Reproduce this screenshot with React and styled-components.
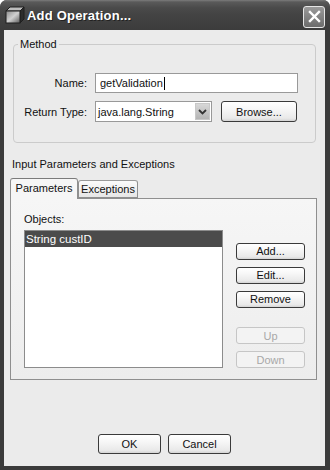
import styled, { createGlobalStyle } from 'styled-components';

const GlobalStyle = createGlobalStyle`
  html, body {
    margin: 0;
    padding: 0;
    background: #ffffff;
  }
  body {
    font-family: 'Liberation Sans', Arial, sans-serif;
    font-size: 11px;
    color: #111;
  }
  * {
    box-sizing: border-box;
  }
`;

const Window = styled.div`
  width: 330px;
  height: 470px;
  display: flex;
  flex-direction: column;
  background: #3b3b3b;
  border-radius: 7px 7px 0 0;
  overflow: hidden;
`;

const TitleBar = styled.div`
  height: 30px;
  flex: none;
  display: flex;
  align-items: center;
  padding: 0 5px 0 5px;
  background: linear-gradient(#7c7c7c 0, #5a5a5a 2px, #4a4a4a 8px, #434343 50%, #3c3c3c 100%);
  .title {
    flex: 1;
    margin-left: 2px;
    color: #fff;
    font-weight: 700;
    font-size: 13px;
    letter-spacing: 0.2px;
    text-shadow: 1px 1px 0 #222;
  }
`;

const CloseButton = styled.div`
  width: 22px;
  height: 22px;
  border: 1px solid #e6e6e6;
  border-radius: 3px;
  background: linear-gradient(#9a9a9a, #6c6c6c);
  display: flex;
  align-items: center;
  justify-content: center;
  margin-top: 3px;
`;

const Client = styled.div`
  flex: 1;
  margin: 0 5px 4px 4px;
  background: #ebebeb;
  display: flex;
  flex-direction: column;
`;

const GroupBox = styled.fieldset`
  margin: 8px 9px 0 9px;
  padding: 0;
  border: 1px solid #cbcbcb;
  border-radius: 4px;
  legend {
    margin-left: 4px;
    padding: 0 2px;
    line-height: 13px;
  }
`;

const FormGrid = styled.div`
  display: grid;
  grid-template-columns: 65px 1fr;
  column-gap: 8px;
  row-gap: 8px;
  align-items: center;
  padding: 22px 0 20px 8px;
  label {
    justify-self: end;
  }
`;

const TextField = styled.div`
  width: 203px;
  height: 20px;
  border: 1px solid #999;
  background: #fff;
  padding-left: 4px;
  display: flex;
  align-items: center;
  .caret {
    width: 1px;
    height: 13px;
    background: #000;
    margin-left: 1px;
  }
`;

const ReturnRow = styled.div`
  display: flex;
  align-items: center;
  gap: 9px;
`;

const Select = styled.div`
  width: 117px;
  height: 21px;
  border: 1px solid #999;
  background: #fff;
  display: flex;
  align-items: center;
  padding: 1px;
  .value {
    flex: 1;
    padding-left: 1px;
  }
`;

const DropButton = styled.div`
  width: 15px;
  height: 17px;
  background: linear-gradient(#d8d8d8, #b4b4b4);
  border: 1px solid #c8c8c8;
  display: flex;
  align-items: center;
  justify-content: center;
`;

const PushButton = styled.button`
  width: ${(p) => p.$w || 69}px;
  height: ${(p) => p.$h || 18}px;
  padding: 0;
  font-family: inherit;
  font-size: 11px;
  border-radius: 3px;
  border: 1px solid ${(p) => (p.disabled ? '#c6c6c6' : '#3a3a3a')};
  color: ${(p) => (p.disabled ? '#a8a8a8' : '#111')};
  background: ${(p) =>
    p.disabled
      ? '#f3f3f3'
      : 'linear-gradient(#ffffff 0, #f6f6f6 40%, #e9e9e9 85%, #d4d4d4 100%)'};
`;

const SectionLabel = styled.div`
  margin: 15px 0 0 8px;
  line-height: 13px;
`;

const TabStrip = styled.div`
  margin: 7px 0 0 6px;
  height: 20px;
  display: flex;
  align-items: flex-end;
  position: relative;
  z-index: 1;
`;

const Tab = styled.div`
  width: ${(p) => p.$w}px;
  height: ${(p) => (p.$active ? 21 : 18)}px;
  margin-bottom: ${(p) => (p.$active ? -1 : 0)}px;
  border: 1px solid #8f8f8f;
  border-top-color: ${(p) => (p.$active ? '#7a7a7a' : '#9a9a9a')};
  border-bottom: ${(p) => (p.$active ? 'none' : '1px solid #8f8f8f')};
  border-radius: 3px 3px 0 0;
  background: ${(p) => (p.$active ? '#f6f6f6' : 'linear-gradient(#fbfbfb, #e6e6e6)')};
  display: flex;
  align-items: center;
  justify-content: center;
  padding-bottom: ${(p) => (p.$active ? 2 : 0)}px;
  font-size: 11px;
`;

const TabPanel = styled.div`
  margin: 0 8px 0 6px;
  height: 182px;
  border: 1px solid #8f8f8f;
  background: linear-gradient(#f6f6f6, #ededed);
  display: flex;
  padding: 14px 12px 11px 13px;
  gap: 13px;
`;

const ListColumn = styled.div`
  display: flex;
  flex-direction: column;
  gap: 4px;
  .caption {
    line-height: 13px;
  }
`;

const ListBox = styled.div`
  width: 199px;
  height: 138px;
  border: 1px solid #8c8c8c;
  background: #fff;
  padding: 0;
`;

const ListItem = styled.div`
  height: 16px;
  line-height: 16px;
  padding-left: 1px;
  font-size: 11.5px;
  background: ${(p) => (p.$selected ? '#4b4b4b' : 'transparent')};
  color: ${(p) => (p.$selected ? '#fff' : '#111')};
`;

const ButtonStack = styled.div`
  margin-top: 30px;
  display: flex;
  flex-direction: column;
  gap: 7px;
  .gap {
    height: 6px;
  }
`;

const Footer = styled.div`
  margin-top: auto;
  padding-bottom: 12px;
  display: flex;
  justify-content: center;
  gap: 7px;
`;

function CubeIcon() {
  return (
    <svg width="20" height="18" viewBox="0 0 20 18">
      <defs>
        <linearGradient id="front" x1="0" y1="0" x2="1" y2="1">
          <stop offset="0" stopColor="#8a8a8a" />
          <stop offset="0.5" stopColor="#d0d0d0" />
          <stop offset="1" stopColor="#5a5a5a" />
        </linearGradient>
      </defs>
      <polygon points="1,5 5,1 19,1 15,5" fill="#bdbdbd" stroke="#1e1e1e" strokeWidth="1" />
      <polygon points="15,5 19,1 19,13 15,17" fill="#2c2c2c" stroke="#1e1e1e" strokeWidth="1" />
      <rect x="1" y="5" width="14" height="12" fill="url(#front)" stroke="#1e1e1e" strokeWidth="1" />
    </svg>
  );
}

export default function App() {
  return (
    <>
      <GlobalStyle />
      <Window>
        <TitleBar>
          <CubeIcon />
          <span className="title">Add Operation...</span>
          <CloseButton>
            <svg width="13" height="13" viewBox="0 0 13 13">
              <path d="M2 2 L11 11 M11 2 L2 11" stroke="#fff" strokeWidth="2.4" strokeLinecap="square" />
            </svg>
          </CloseButton>
        </TitleBar>
        <Client>
          <GroupBox>
            <legend>Method</legend>
            <FormGrid>
              <label>Name:</label>
              <TextField>
                getValidation
                <span className="caret" />
              </TextField>
              <label>Return Type:</label>
              <ReturnRow>
                <Select>
                  <span className="value">java.lang.String</span>
                  <DropButton>
                    <svg width="9" height="6" viewBox="0 0 9 6">
                      <path d="M1 1 L4.5 4.5 L8 1" fill="none" stroke="#333" strokeWidth="1.8" />
                    </svg>
                  </DropButton>
                </Select>
                <PushButton $w={76} $h={21}>Browse...</PushButton>
              </ReturnRow>
            </FormGrid>
          </GroupBox>
          <SectionLabel>Input Parameters and Exceptions</SectionLabel>
          <TabStrip>
            <Tab $active $w={68}>Parameters</Tab>
            <Tab $w={60}>Exceptions</Tab>
          </TabStrip>
          <TabPanel>
            <ListColumn>
              <span className="caption">Objects:</span>
              <ListBox>
                <ListItem $selected>String custID</ListItem>
              </ListBox>
            </ListColumn>
            <ButtonStack>
              <PushButton>Add...</PushButton>
              <PushButton>Edit...</PushButton>
              <PushButton>Remove</PushButton>
              <div className="gap" />
              <PushButton disabled>Up</PushButton>
              <PushButton disabled>Down</PushButton>
            </ButtonStack>
          </TabPanel>
          <Footer>
            <PushButton $w={63} $h={20}>OK</PushButton>
            <PushButton $w={63} $h={20}>Cancel</PushButton>
          </Footer>
        </Client>
      </Window>
    </>
  );
}
